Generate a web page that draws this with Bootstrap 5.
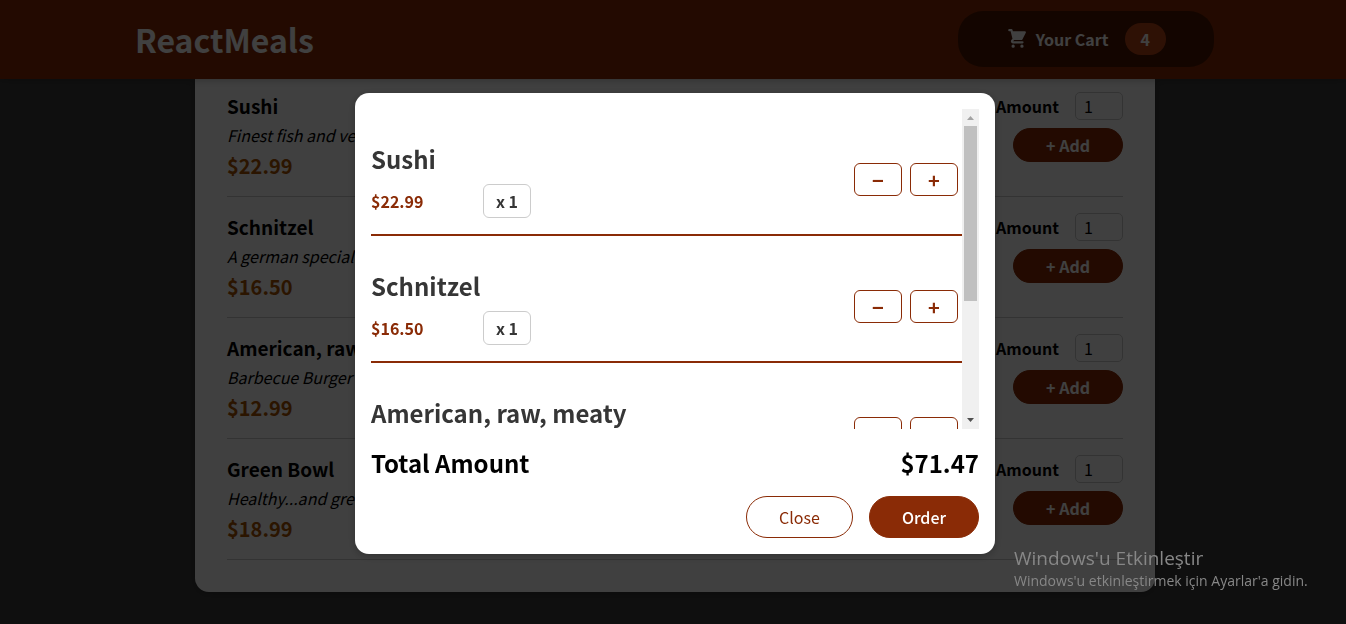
<!DOCTYPE html>
<html lang="en">
<head>
<meta charset="utf-8">
<meta name="viewport" content="width=device-width, initial-scale=1">
<title>ReactMeals</title>
<link rel="stylesheet" href="https://cdn.jsdelivr.net/npm/bootstrap@5.3.0/dist/css/bootstrap.min.css">
<style>
  :root { --brand: #8a2b06; --line: #ccc; }
  body { font-family: "Noto Sans CJK JP", sans-serif; font-size: 16px; line-height: 24px; color: #000; background: #3f3f3f; min-height: 100vh; }
  .site-header { height: 79px; padding: 0 132px 2px 135px; background: var(--brand); box-shadow: 0 1px 8px rgba(0,0,0,.25); position: relative; z-index: 1; }
  .site-header h1 { font-size: 32px; line-height: 46px; font-weight: 700; color: #fff; margin: 0; }
  .cart-button { border: 0; background: #4d1601; color: #fff; font-weight: 700; padding: 12px 48px; border-radius: 25px; }
  .cart-button svg { width: 22px; height: 22px; margin-right: 8px; }
  .cart-count { background: #b94517; padding: 4px 16px; border-radius: 25px; margin-left: 16px; }
  .page-main { padding-left: 4px; }
  .meals-panel { max-width: 960px; margin: 0 auto 32px; background: #fff; padding: 13px 32px 32px; border-radius: 0 0 14px 14px; box-shadow: 0 2px 8px rgba(0,0,0,.25); }
  .meal { padding-bottom: 16px; border-bottom: 1px solid var(--line); }
  .meal + .meal { margin-top: 16px; }
  .meal h3 { font-size: 19px; line-height: 27px; font-weight: 700; margin: 0 0 4px; }
  .meal-price { font-size: 20px; line-height: 29px; font-weight: 700; color: #ad5502; margin-top: 4px; }
  .meal label { font-weight: 700; margin-right: 16px; }
  .meal input { width: 48px; height: 28px; border: 1px solid var(--line); border-radius: 5px; padding: 0 0 0 8px; background: #fff; color: #000; }
  .add-button { border: 1px solid var(--brand); background: var(--brand); color: #fff; font-weight: 700; padding: 4px 32px; border-radius: 20px; line-height: 24px; }
  .modal-backdrop-layer { background: rgba(0,0,0,.75); z-index: 20; }
  .cart-modal { z-index: 30; padding: 93px 0 0 4px; overflow: hidden; }
  .cart-dialog { max-width: 640px; margin: 0 auto; padding: 16px; background: #fff; border-radius: 14px; box-shadow: 0 2px 8px rgba(0,0,0,.25); }
  .cart-scroll { height: 320px; }
  .cart-items { overflow: hidden; padding: 0; margin: 0; flex: 1; }
  .cart-item { margin-top: 16px; padding: 16px 4px 16px 0; border-bottom: 2px solid var(--brand); }
  .cart-item h2 { font-size: 24px; line-height: 35px; font-weight: 700; color: #363636; margin: 0 0 8px; }
  .cart-summary { width: 160px; }
  .item-price { font-weight: 700; color: var(--brand); }
  .item-amount { font-weight: 700; color: #363636; border: 1px solid var(--line); border-radius: 6px; padding: 4px 12px; }
  .step-button { width: 48px; height: 33px; border: 1px solid var(--brand); border-radius: 6px; background: transparent; color: var(--brand); font-size: 20px; line-height: 29px; font-weight: 700; padding: 1px 0; }
  .scroll-track { width: 17px; background: #f0f0f0; }
  .scroll-track svg { width: 17px; height: 17px; display: block; }
  .scroll-thumb { width: 13px; background: #c0c0c0; margin-bottom: auto; height: 175px; }
  .total-row { font-size: 24px; line-height: 35px; font-weight: 700; margin: 16px 0; }
  .action-button { border: 1px solid var(--brand); border-radius: 25px; padding: 8px 32px; background: transparent; color: var(--brand); }
  .action-button.primary-action { background: var(--brand); color: #fff; font-weight: 500; }
  .os-notice { z-index: 40; right: 34px; bottom: 33px; width: 298px; color: #878787; font-family: "Open Sans", sans-serif; font-size: 14px; line-height: 20px; pointer-events: none; }
  .os-notice strong { display: block; font-size: 19px; line-height: 26px; font-weight: 400; }
</style>
</head>
<body>
<header class="site-header d-flex justify-content-between align-items-center">
  <h1>ReactMeals</h1>
  <button type="button" class="cart-button d-flex align-items-center">
    <svg viewBox="0 0 20 20" fill="currentColor" aria-hidden="true"><path d="M3 1a1 1 0 000 2h1.22l.305 1.222a.997.997 0 00.01.042l1.358 5.43-.893.892C3.74 11.846 4.632 14 6.414 14H15a1 1 0 000-2H6.414l1-1H14a1 1 0 00.894-.553l3-6A1 1 0 0017 3H6.28l-.31-1.243A1 1 0 005 1H3zM16 16.5a1.5 1.5 0 11-3 0 1.5 1.5 0 013 0zM6.5 18a1.5 1.5 0 100-3 1.5 1.5 0 000 3z"/></svg>
    <span>Your Cart</span><span class="cart-count">4</span>
  </button>
</header>

<main class="page-main">
  <ul class="meals-panel list-unstyled">
    <li class="meal d-flex justify-content-between">
      <div><h3>Sushi</h3><div class="fst-italic">Finest fish and veggies</div><div class="meal-price">$22.99</div></div>
      <form class="text-end"><div class="d-flex align-items-center mb-2"><label for="m1">Amount</label><input id="m1" type="text" inputmode="numeric" value="1"></div><button type="button" class="add-button">+ Add</button></form>
    </li>
    <li class="meal d-flex justify-content-between">
      <div><h3>Schnitzel</h3><div class="fst-italic">A german specialty!</div><div class="meal-price">$16.50</div></div>
      <form class="text-end"><div class="d-flex align-items-center mb-2"><label for="m2">Amount</label><input id="m2" type="text" inputmode="numeric" value="1"></div><button type="button" class="add-button">+ Add</button></form>
    </li>
    <li class="meal d-flex justify-content-between">
      <div><h3>American, raw, meaty</h3><div class="fst-italic">Barbecue Burger</div><div class="meal-price">$12.99</div></div>
      <form class="text-end"><div class="d-flex align-items-center mb-2"><label for="m3">Amount</label><input id="m3" type="text" inputmode="numeric" value="1"></div><button type="button" class="add-button">+ Add</button></form>
    </li>
    <li class="meal d-flex justify-content-between">
      <div><h3>Green Bowl</h3><div class="fst-italic">Healthy...and green...</div><div class="meal-price">$18.99</div></div>
      <form class="text-end"><div class="d-flex align-items-center mb-2"><label for="m4">Amount</label><input id="m4" type="text" inputmode="numeric" value="1"></div><button type="button" class="add-button">+ Add</button></form>
    </li>
  </ul>
</main>

<div class="modal-backdrop-layer position-fixed top-0 start-0 w-100 h-100"></div>

<div class="cart-modal position-fixed top-0 start-0 w-100 h-100" role="dialog" aria-label="Cart">
  <div class="cart-dialog">
    <div class="cart-scroll d-flex">
      <ul class="cart-items list-unstyled">
        <li class="cart-item d-flex justify-content-between align-items-center">
          <div><h2>Sushi</h2><div class="cart-summary d-flex justify-content-between align-items-center"><span class="item-price">$22.99</span><span class="item-amount">x 1</span></div></div>
          <div class="d-flex gap-2"><button type="button" class="step-button">−</button><button type="button" class="step-button">+</button></div>
        </li>
        <li class="cart-item d-flex justify-content-between align-items-center">
          <div><h2>Schnitzel</h2><div class="cart-summary d-flex justify-content-between align-items-center"><span class="item-price">$16.50</span><span class="item-amount">x 1</span></div></div>
          <div class="d-flex gap-2"><button type="button" class="step-button">−</button><button type="button" class="step-button">+</button></div>
        </li>
        <li class="cart-item d-flex justify-content-between align-items-center">
          <div><h2>American, raw, meaty</h2><div class="cart-summary d-flex justify-content-between align-items-center"><span class="item-price">$12.99</span><span class="item-amount">x 1</span></div></div>
          <div class="d-flex gap-2"><button type="button" class="step-button">−</button><button type="button" class="step-button">+</button></div>
        </li>
      </ul>
      <div class="scroll-track d-flex flex-column align-items-center" aria-hidden="true">
        <svg viewBox="0 0 17 17"><path d="M5 11h7L8.500 7z" fill="#a3a3a3"/></svg>
        <div class="scroll-thumb"></div>
        <svg viewBox="0 0 17 17"><path d="M5 6h7L8.500 10z" fill="#505050"/></svg>
      </div>
    </div>
    <div class="total-row d-flex justify-content-between"><span>Total Amount</span><span>$71.47</span></div>
    <div class="d-flex justify-content-end gap-3">
      <button type="button" class="action-button">Close</button>
      <button type="button" class="action-button primary-action">Order</button>
    </div>
  </div>
</div>

<div class="os-notice position-fixed"><strong>Windows'u Etkinleştir</strong>Windows'u etkinleştirmek için Ayarlar'a gidin.</div>
<script src="https://cdn.jsdelivr.net/npm/bootstrap@5.3.0/dist/js/bootstrap.bundle.min.js"></script>
</body>
</html>
